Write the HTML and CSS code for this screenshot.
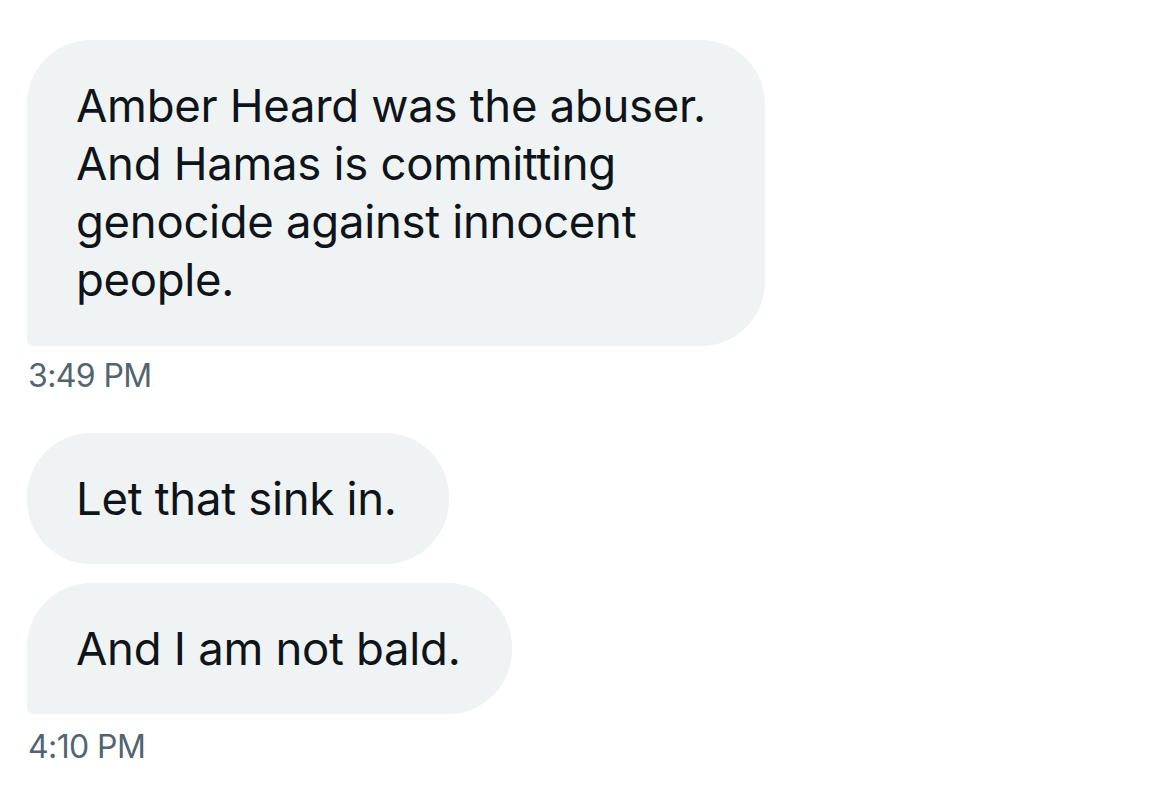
FILE: index.html
```html
<!DOCTYPE html>
<html lang="en">
<head>
<meta charset="utf-8">
<title>Messages</title>
<link rel="stylesheet" href="styles.css">
</head>
<body>
<main class="thread">
  <section class="group">
    <div class="bubble bubble-wide tail">Amber Heard was the abuser.<br>And Hamas is committing<br>genocide against innocent<br>people.</div>
    <div class="time">3:49 PM</div>
  </section>
  <section class="group group-second">
    <div class="bubble">Let that sink in.</div>
    <div class="bubble tail">And I am not bald.</div>
    <div class="time time-late">4:10 PM</div>
  </section>
</main>
</body>
</html>
```

FILE: styles.css
```css
html, body {
  margin: 0;
  padding: 0;
  background: #ffffff;
}

body {
  font-family: "Inter", "Roboto", "Liberation Sans", sans-serif;
  color: #0f1419;
}

.thread {
  padding: 40px 0 0 27px;
  display: flex;
  flex-direction: column;
}

.group {
  display: flex;
  flex-direction: column;
  align-items: flex-start;
  gap: 19.5px;
}

.group-second {
  margin-top: 37px;
}

.bubble {
  box-sizing: border-box;
  background: #eff3f4;
  font-size: 45.5px;
  letter-spacing: -0.3px;
  line-height: 58.3px;
  padding: 36.5px 52px 36px 49px;
  border-radius: 64px;
  white-space: nowrap;
}

.bubble-wide {
  width: 738px;
}

.tail {
  border-bottom-left-radius: 6px;
}

.time {
  font-size: 32px;
  letter-spacing: -0.6px;
  line-height: 40px;
  color: #536471;
  margin-top: -9px;
  padding-left: 1px;
}

.time-late {
  margin-top: -7px;
}
```
